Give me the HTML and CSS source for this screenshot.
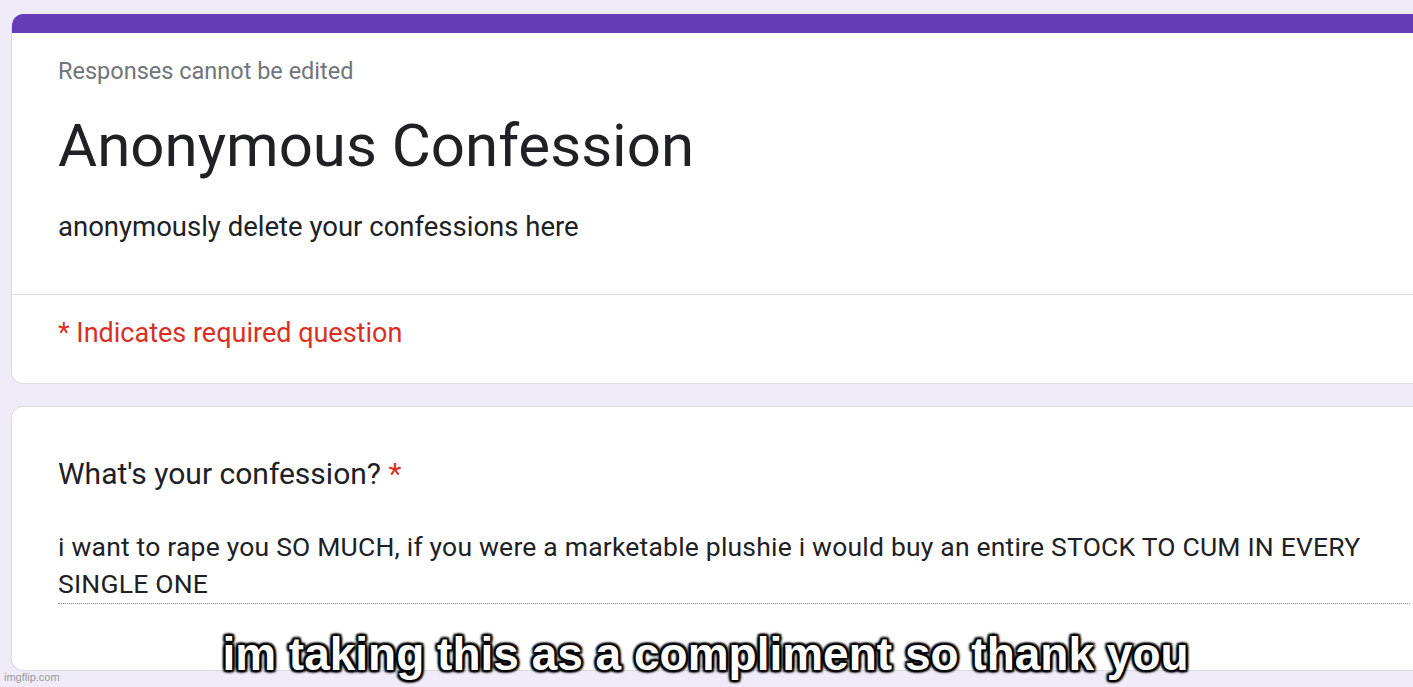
FILE: index.html
```html
<!DOCTYPE html>
<html lang="en">
<head>
<meta charset="utf-8">
<title>Anonymous Confession</title>
<link rel="stylesheet" href="styles.css">
</head>
<body>
<main class="form">
  <section class="card header-card">
    <div class="accent"></div>
    <div class="header-top">
      <p class="note">Responses cannot be edited</p>
      <h1 class="title">Anonymous Confession</h1>
      <p class="desc">anonymously delete your confessions here</p>
    </div>
    <div class="header-bottom">
      <p class="required">* Indicates required question</p>
    </div>
  </section>
  <section class="card question-card">
    <p class="question">What's your confession? <span class="star">*</span></p>
    <p class="answer">i want to rape you SO MUCH, if you were a marketable plushie i would buy an entire STOCK TO CUM IN EVERY SINGLE ONE</p>
  </section>
</main>
<div class="caption">im taking this as a compliment so thank you</div>
<div class="watermark">imgflip.com</div>
</body>
</html>
```
FILE: styles.css
```css
html, body {
  margin: 0;
  padding: 0;
}
body {
  background: #efebf8;
  width: 1413px;
  height: 687px;
  overflow: hidden;
  position: relative;
  font-family: Roboto, "Liberation Sans", sans-serif;
  color: #202124;
}
.form {
  padding: 14px 0 0 11px;
  display: flex;
  flex-direction: column;
  gap: 22px;
}
.card {
  background: #fff;
  border: 1px solid #dadce0;
  border-right: none;
  border-radius: 12px 0 0 12px;
  width: 1420px;
  box-sizing: border-box;
}
.header-card {
  border-top: none;
  overflow: hidden;
}
.accent {
  height: 19px;
  background: #673ab7;
}
.header-top {
  padding: 24px 0 50px 46px;
  border-bottom: 1px solid #dadce0;
}
.note {
  margin: 0;
  font-size: 23.5px;
  line-height: 28px;
  color: #70757a;
}
.title {
  margin: 24px 0 0;
  font-weight: 400;
  font-size: 60px;
  line-height: 74px;
}
.desc {
  margin: 27px 0 0;
  font-size: 27.5px;
  line-height: 34px;
}
.header-bottom {
  padding: 21px 0 33px 46px;
}
.required {
  margin: 0;
  font-size: 27px;
  line-height: 34px;
  color: #d93025;
}
.question-card {
  height: 265px;
  padding: 49px 0 0 46px;
}
.question {
  margin: 0;
  font-size: 30px;
  line-height: 36px;
}
.star {
  color: #d93025;
}
.answer {
  margin: 36px 0 0;
  width: 1352px;
  font-size: 26.5px;
  line-height: 37px;
  letter-spacing: 0.2px;
  padding-bottom: 1px;
  border-bottom: 1px dotted #8a8a8a;
}
.caption {
  position: absolute;
  left: 0;
  right: 0;
  top: 626px;
  text-align: center;
  font-family: "Liberation Sans", Arial, sans-serif;
  font-weight: 700;
  font-size: 46px;
  line-height: 56px;
  color: #fff;
  text-indent: -2px;
  text-shadow:
    2px 2px 2px #000, -2px -2px 2px #000, 2px -2px 2px #000, -2px 2px 2px #000,
    0 2px 3px #000, 0 -2px 3px #000, 2px 0 3px #000, -2px 0 3px #000;
}
.watermark {
  position: absolute;
  left: 4px;
  top: 671px;
  font-family: "Liberation Sans", Arial, sans-serif;
  font-size: 11px;
  color: #9a9a9a;
}
```
